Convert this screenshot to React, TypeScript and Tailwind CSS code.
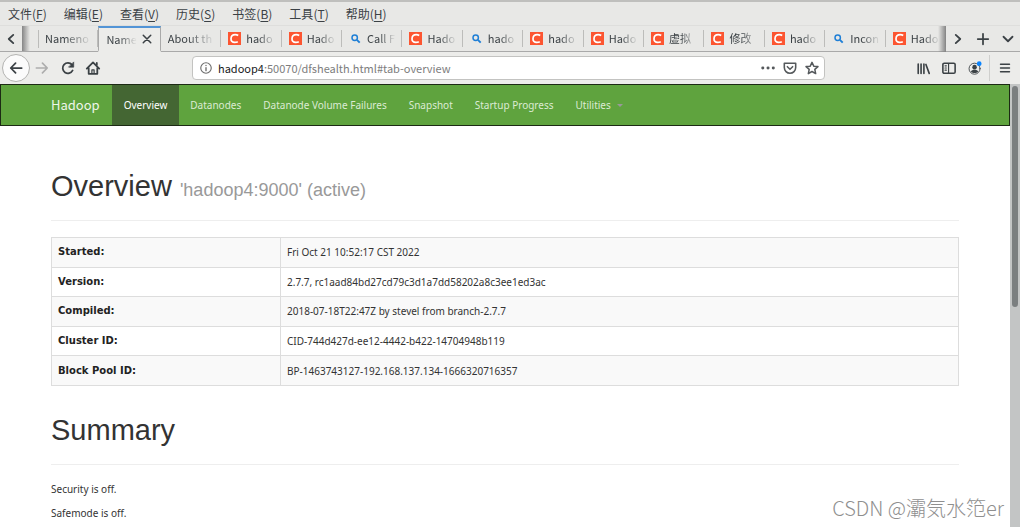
import React from "react";

type Tab = { title: string; icon?: "csdn" | "search"; active?: boolean };

const menus: [string, string][] = [
  ["文件", "F"],
  ["编辑", "E"],
  ["查看", "V"],
  ["历史", "S"],
  ["书签", "B"],
  ["工具", "T"],
  ["帮助", "H"],
];

const tabs: Tab[] = [
  { title: "Nameno" },
  { title: "Name", active: true },
  { title: "About th" },
  { title: "hado", icon: "csdn" },
  { title: "Hado", icon: "csdn" },
  { title: "Call F", icon: "search" },
  { title: "Hado", icon: "csdn" },
  { title: "hado", icon: "search" },
  { title: "hado", icon: "csdn" },
  { title: "Hado", icon: "csdn" },
  { title: "虚拟", icon: "csdn" },
  { title: "修改", icon: "csdn" },
  { title: "hado", icon: "csdn" },
  { title: "Incon", icon: "search" },
  { title: "Hado", icon: "csdn" },
];

const navLinks = ["Datanodes", "Datanode Volume Failures", "Snapshot", "Startup Progress"];

const rows: [string, string][] = [
  ["Started:", "Fri Oct 21 10:52:17 CST 2022"],
  ["Version:", "2.7.7, rc1aad84bd27cd79c3d1a7dd58202a8c3ee1ed3ac"],
  ["Compiled:", "2018-07-18T22:47Z by stevel from branch-2.7.7"],
  ["Cluster ID:", "CID-744d427d-ee12-4442-b422-14704948b119"],
  ["Block Pool ID:", "BP-1463743127-192.168.137.134-1666320716357"],
];

function Icon({ children, className = "size-4" }: { children: React.ReactNode; className?: string }) {
  return (
    <svg
      viewBox="0 0 16 16"
      className={`shrink-0 ${className}`}
      fill="none"
      stroke="currentColor"
      strokeWidth="1.8"
      strokeLinecap="round"
      strokeLinejoin="round"
      aria-hidden="true"
    >
      {children}
    </svg>
  );
}

function Favicon({ kind }: { kind: "csdn" | "search" }) {
  if (kind === "csdn") {
    return (
      <svg viewBox="0 0 13 13" className="size-[13px] shrink-0" aria-hidden="true">
        <rect width="13" height="13" fill="#fc5531" />
        <path
          d="M10.2 3.5C9.4 2.9 8.3 2.6 7.2 2.6 4.8 2.6 3.1 4.2 3 6.7c-.1 2.3 1.3 3.7 3.6 3.7 1.2 0 2.3-.2 3.2-.7"
          fill="none"
          stroke="#fff"
          strokeWidth="1.7"
        />
      </svg>
    );
  }
  return (
    <svg viewBox="0 0 13 13" className="size-[13px] shrink-0" fill="none" stroke="#1f7fd6" aria-hidden="true">
      <circle cx="5.7" cy="5.7" r="2.7" strokeWidth="1.5" />
      <path d="M7.9 7.9l2.8 2.8" strokeWidth="1.9" />
    </svg>
  );
}

function TabItem({ tab }: { tab: Tab }) {
  const shape = tab.active
    ? "border-x border-t-2 border-b-2 border-x-[#a9a9a9] border-t-[#5294d6] border-b-transparent bg-[#ececea] pl-[7px]"
    : "border-b border-[#a9a9a9] pl-[7px]";
  return (
    <div className={`flex min-w-0 flex-1 items-center gap-[5px] ${shape}`}>
      {tab.icon && <Favicon kind={tab.icon} />}
      <button
        type="button"
        className="min-w-0 flex-1 text-left whitespace-nowrap [mask-image:linear-gradient(to_right,black_40%,transparent)]"
      >
        {tab.title}
      </button>
      {tab.active ? (
        <button type="button" aria-label="Close tab" className="mr-2">
          <Icon className="size-[10px]">
            <path d="M2 2l12 12M14 2L2 14" strokeWidth="2.4" />
          </Icon>
        </button>
      ) : (
        <span className="my-1 w-px self-stretch bg-[#bcbcba]" />
      )}
    </div>
  );
}

function BrowserChrome() {
  return (
    <header className="bg-[#ececea] font-['Noto_Sans_CJK_SC',sans-serif] text-xs text-[#3b4145]">
      <nav aria-label="Menu bar" className="flex h-[25px] items-center gap-[17px] border-t-2 border-[#bfbfbd] bg-[#e8e8e6] pl-2">
        {menus.map(([label, key]) => (
          <button type="button" key={key} className="whitespace-nowrap">
            {label}(<span className="underline underline-offset-2">{key}</span>)
          </button>
        ))}
      </nav>

      <div className="flex h-[27px] border-t border-[#dededc] bg-[#e8e8e6] text-[11px]">
        <button type="button" aria-label="Scroll tabs left" className="flex w-[22px] items-center justify-center border-b border-[#a9a9a9]">
          <Icon className="size-3">
            <path d="M11 2.5L5 8l6 5.5" strokeWidth="2.4" />
          </Icon>
        </button>
        <div className="flex w-4 border-b border-[#a9a9a9]">
          <div className="w-2 bg-linear-to-r from-[#858585] to-transparent" />
        </div>
        <div className="relative flex min-w-0 flex-1">
          <span className="absolute top-1 left-0 h-[18px] w-px bg-[#bcbcba]" />
          {tabs.map((tab, i) => (
            <TabItem key={i} tab={tab} />
          ))}
          <span className="absolute inset-y-0 right-0 w-2 bg-linear-to-l from-[#858585] to-transparent" />
        </div>
        <div className="flex w-[74px] items-center justify-between border-b border-[#a9a9a9] px-[6px]">
          <button type="button" aria-label="Scroll tabs right">
            <Icon className="size-3">
              <path d="M5 2.5L11 8l-6 5.5" strokeWidth="2.4" />
            </Icon>
          </button>
          <button type="button" aria-label="New tab">
            <Icon className="size-[14px]">
              <path d="M8 2v12M2 8h12" strokeWidth="2" />
            </Icon>
          </button>
          <button type="button" aria-label="List all tabs">
            <Icon className="size-3">
              <path d="M2 5l6 6 6-6" strokeWidth="2.4" />
            </Icon>
          </button>
        </div>
      </div>

      <div className="flex h-8 items-center pr-[9px] pl-[2px]">
        <button type="button" aria-label="Back" className="flex size-7 items-center justify-center rounded-full border border-[#b3b3b1] bg-[#fbfbfb]">
          <Icon className="size-[14px]">
            <path d="M14.5 8H2M7.5 2.5L2 8l5.500 5.500" strokeWidth="2" />
          </Icon>
        </button>
        <button type="button" aria-label="Forward" className="ml-[5px] text-[#adadad]">
          <Icon className="size-[14px]">
            <path d="M1.500 8H14M8.500 2.500L14 8l-5.500 5.500" strokeWidth="1.900" />
          </Icon>
        </button>
        <button type="button" aria-label="Reload" className="ml-3">
          <Icon className="size-[14px]">
            <path d="M13.300 10.800A6 6 0 1 1 12.500 4.200" strokeWidth="2" />
            <path d="M14.500 1.500v5.500H9z" fill="currentColor" strokeWidth="0.8" />
          </Icon>
        </button>
        <button type="button" aria-label="Home" className="ml-[10px]">
          <Icon>
            <path d="M1.800 8.600L8 2.400l6.200 6.200M3.700 8.200v5.600h8.600V8.200M11.800 3v2" />
            <path d="M6.900 9.800h2.200v3.700H6.900z" strokeWidth="1.200" />
          </Icon>
        </button>

        <div className="ml-[91px] flex h-6 min-w-0 flex-1 items-center rounded border border-[#c3c3c1] bg-white pr-[5px] pl-[7px]">
          <Icon className="size-3 text-[#6c6c6c]">
            <circle cx="8" cy="8" r="7" strokeWidth="1.5" />
            <path d="M8 7.5v4M8 4.5v.2" />
          </Icon>
          <a href="#tab-overview" className="ml-[6px] min-w-0 flex-1 truncate text-[11px] text-[#7d7d7d]">
            <span className="text-[#17191b]">hadoop4</span>:50070/dfshealth.html#tab-overview
          </a>
          <div className="flex items-center gap-2 text-[#55595c]">
            <button type="button" aria-label="Page actions">
              <Icon className="size-[14px]">
                <path d="M2 8h.1M8 8h.1M14 8h.1" strokeWidth="3.4" />
              </Icon>
            </button>
            <button type="button" aria-label="Save to Pocket">
              <Icon className="size-[14px]">
                <path d="M1.5 2.5h13v5a6.5 6.5 0 0 1-13 0zM5 6.500l3 3 3-3" />
              </Icon>
            </button>
            <button type="button" aria-label="Bookmark this page">
              <Icon className="size-[14px]">
                <path d="M8 1.5l2 4.400 4.800.5-3.600 3.200 1 4.800L8 12l-4.200 2.400 1-4.800L1.200 6.400 6 5.900z" strokeWidth="1.7" />
              </Icon>
            </button>
          </div>
        </div>

        <div className="ml-[92px] flex items-center gap-3">
          <button type="button" aria-label="Library">
            <Icon className="size-[13px]">
              <path d="M1.5 2.500v11.5M5 2.500v11.500M8.500 2.500v11.500M11 3l4 11" strokeWidth="2" />
            </Icon>
          </button>
          <button type="button" aria-label="Sidebars">
            <Icon className="size-[14px]">
              <rect x="1" y="2.5" width="14" height="11.5" rx="1.500" />
              <path d="M7.500 3v11M3.500 5.500h1.500M3.500 8h1.500M3.500 10.500h1.500" strokeWidth="1.300" />
            </Icon>
          </button>
          <button type="button" aria-label="Account">
            <Icon className="size-[14px]">
              <circle cx="7.5" cy="8.8" r="6.3" strokeWidth="1" />
              <circle cx="7.5" cy="7" r="2.6" fill="currentColor" stroke="none" />
              <path d="M3.300 12c1.200-2.600 7.200-2.600 8.400 0-2 2.300-6.400 2.300-8.400 0z" fill="currentColor" stroke="none" />
              <circle cx="12.8" cy="3" r="2.7" fill="#0a84ff" stroke="none" />
            </Icon>
          </button>
        </div>
        <span className="ml-[7px] h-[26px] w-px bg-[#cfcfcd]" />
        <button type="button" aria-label="Open menu" className="ml-[9px]">
          <Icon className="size-3">
            <path d="M2 3h12M2 8h12M2 13h12" strokeWidth="1.9" />
          </Icon>
        </button>
      </div>
    </header>
  );
}

export default function App() {
  return (
    <div className="relative flex h-screen flex-col overflow-hidden bg-white">
      <BrowserChrome />
      <div className="flex min-h-0 flex-1">
        <div className="min-w-0 flex-1 overflow-hidden font-['Noto_Sans',sans-serif] text-[10px] leading-[14px] text-[#333]">
          <nav aria-label="Hadoop" className="flex h-[42px] items-stretch border border-[#1c2a14] bg-[#5fa33e] pl-[50px] text-[#dcebd3]">
            <a href="#top" className="flex items-center pr-3 font-['Noto_Sans_CJK_SC',sans-serif] text-[13px] text-[#eef6ea]">
              Hadoop
            </a>
            <a href="#tab-overview" className="flex items-center bg-[#446633] px-3 text-white">
              Overview
            </a>
            {navLinks.map((label) => (
              <a key={label} href="#nav" className="flex items-center px-[11px]">
                {label}
              </a>
            ))}
            <button type="button" className="flex items-center gap-[6px] px-[11px]">
              Utilities
              <span className="border-x-[3px] border-t-[3px] border-x-transparent border-t-[#999]" />
            </button>
          </nav>

          <main className="px-[51px] pt-11">
            <h1 className="border-b border-[#eee] pb-[18px] font-['Liberation_Sans',sans-serif] text-[29px] leading-8">
              Overview <small className="text-[18px] leading-none text-[#999]">'hadoop4:9000' (active)</small>
            </h1>
            <table className="mt-4 h-[149px] w-full border-collapse text-left">
              <tbody>
                {rows.map(([name, value]) => (
                  <tr key={name} className="odd:bg-[#f9f9f9]">
                    <th
                      scope="row"
                      className="w-[229px] border border-[#ddd] px-[6px] font-['DejaVu_Sans',sans-serif] font-bold text-[#222]"
                    >
                      {name}
                    </th>
                    <td className="border border-[#ddd] px-[6px]">{value}</td>
                  </tr>
                ))}
              </tbody>
            </table>
            <h2 className="mt-7 border-b border-[#eee] pb-[18px] font-['Liberation_Sans',sans-serif] text-[29px] leading-8">
              Summary
            </h2>
            <p className="mt-[17px]">Security is off.</p>
            <p className="mt-[10px]">Safemode is off.</p>
          </main>
        </div>
        <div className="w-[10px] bg-[#c3c5c5] px-[2px] pt-[2px]">
          <div className="h-1/2 rounded-full bg-[#7b7f80]" />
        </div>
      </div>
      <span className="absolute right-4 bottom-[5px] font-['Noto_Sans_CJK_SC',sans-serif] text-xl leading-7 font-light text-[#8f8f8f]">
        CSDN @灞気水笵er
      </span>
    </div>
  );
}
